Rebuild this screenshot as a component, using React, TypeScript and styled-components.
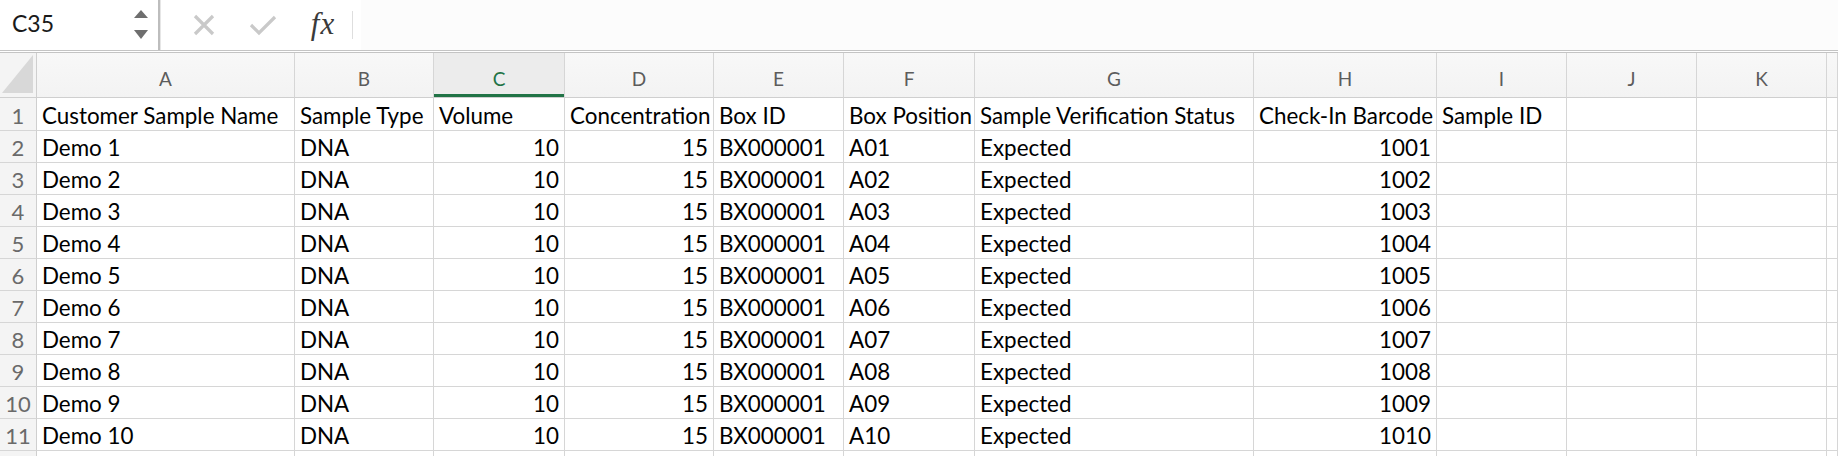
import styled, { createGlobalStyle } from 'styled-components';

const GlobalStyle = createGlobalStyle`
	html, body {
		margin: 0;
		padding: 0;
		background: #ffffff;
	}
	body {
		width: 1838px;
		height: 456px;
		overflow: hidden;
		font-family: Lato, "Liberation Sans", sans-serif;
	}
`;

const COLUMNS = [
	{ key: 'A', width: 258 },
	{ key: 'B', width: 139 },
	{ key: 'C', width: 131 },
	{ key: 'D', width: 149 },
	{ key: 'E', width: 130 },
	{ key: 'F', width: 131 },
	{ key: 'G', width: 279 },
	{ key: 'H', width: 183 },
	{ key: 'I', width: 130 },
	{ key: 'J', width: 130 },
	{ key: 'K', width: 130 },
];

const TEMPLATE = `37px ${COLUMNS.map((c) => c.width + 'px').join(' ')} 1fr`;

const HEADERS = [
	'Customer Sample Name',
	'Sample Type',
	'Volume',
	'Concentration',
	'Box ID',
	'Box Position',
	'Sample Verification Status',
	'Check-In Barcode',
	'Sample ID',
];

const rows = Array.from({ length: 10 }, (_, i) => {
	const n = i + 1;
	return [
		{ text: `Demo ${n}` },
		{ text: 'DNA' },
		{ text: '10', num: true },
		{ text: '15', num: true },
		{ text: 'BX000001' },
		{ text: `A${String(n).padStart(2, '0')}` },
		{ text: 'Expected' },
		{ text: String(1000 + n), num: true },
		{ text: '' },
	];
});

const Sheet = styled.div`
	width: 1838px;
	height: 456px;
	overflow: hidden;
	display: flex;
	flex-direction: column;
`;

const FormulaBar = styled.div`
	height: 50px;
	display: flex;
	align-items: stretch;
	background: #ffffff;
	border-bottom: 3px double #c4c4c4;
	flex-shrink: 0;
`;

const NameBox = styled.div`
	width: 160px;
	display: flex;
	align-items: center;
	justify-content: space-between;
	padding: 0 9px 0 12px;
	box-sizing: border-box;
	font-size: 23px;
	color: #1a1a1a;
	border-right: 2px solid #bdbdbd;
	box-shadow: 1px 0 0 #e6e6e6;
`;

const NameText = styled.span`
	padding-bottom: 5px;
`;

const Stepper = styled.svg`
	display: block;
`;

const ActionGroup = styled.div`
	display: flex;
	align-items: center;
	padding-left: 22px;
`;

const ActionIcon = styled.div<{ $w: number }>`
	width: ${(p) => p.$w}px;
	display: flex;
	align-items: center;
	justify-content: center;
`;

const Fx = styled.span`
	font-family: "Liberation Serif", "DejaVu Serif", serif;
	font-style: italic;
	font-size: 31px;
	color: #3a3a3a;
	letter-spacing: 1px;
	padding-bottom: 3px;
`;

const Divider = styled.div`
	width: 1px;
	height: 28px;
	background: #dedede;
	margin-left: 6px;
`;

const FormulaInput = styled.div`
	flex: 1;
	background: #fcfcfc;
	margin-left: 8px;
`;

const Grid = styled.div`
	display: grid;
	grid-template-columns: ${TEMPLATE};
	grid-template-rows: 45px 33px;
	grid-auto-rows: 32px;
	flex: 1;
`;

const Corner = styled.div`
	background: #f4f4f4;
	border-right: 1px solid #cfcfcf;
	border-bottom: 1px solid #cfcfcf;
	box-sizing: border-box;
	position: relative;
`;

const CornerMark = styled.svg`
	position: absolute;
	left: 2px;
	top: 2px;
`;

const ColHead = styled.div<{ $active?: boolean }>`
	display: flex;
	align-items: center;
	justify-content: center;
	box-sizing: border-box;
	font-size: 19px;
	padding-top: 6px;
	color: ${(p) => (p.$active ? '#217346' : '#5c5c5c')};
	background: ${(p) => (p.$active ? '#ececec' : 'linear-gradient(#f8f8f8, #f3f3f3)')};
	border-right: 1px solid #d6d6d6;
	border-bottom: 1px solid #cfcfcf;
	box-shadow: ${(p) => (p.$active ? 'inset 0 -3px 0 #217346' : 'none')};
`;

const RowHead = styled.div`
	display: flex;
	align-items: flex-end;
	justify-content: center;
	box-sizing: border-box;
	padding-bottom: 1px;
	font-size: 22px;
	color: #6a6a6a;
	background: #f4f4f4;
	border-right: 1px solid #cfcfcf;
	border-bottom: 1px solid #d6d6d6;
`;

const Cell = styled.div<{ $num?: boolean }>`
	display: flex;
	align-items: flex-end;
	justify-content: ${(p) => (p.$num ? 'flex-end' : 'flex-start')};
	box-sizing: border-box;
	padding: 0 5px 1px 5px;
	font-size: 22.4px;
	color: #000000;
	white-space: nowrap;
	overflow: hidden;
	border-right: 1px solid #d6d6d6;
	border-bottom: 1px solid #d6d6d6;
`;

const App = () => {
	const blanks = COLUMNS.length - HEADERS.length + 1;
	return (
		<>
			<GlobalStyle />
			<Sheet>
				<FormulaBar>
					<NameBox>
						<NameText>C35</NameText>
						<Stepper width="16" height="34" viewBox="0 0 16 34">
							<path d="M8 2 L15 10 L1 10 Z" fill="#6e6e6e" />
							<path d="M1 22 L15 22 L8 31 Z" fill="#6e6e6e" />
						</Stepper>
					</NameBox>
					<ActionGroup>
						<ActionIcon $w={44}>
							<svg width="22" height="22" viewBox="0 0 22 22">
								<path d="M2 2 L20 20 M20 2 L2 20" stroke="#c9c9c9" strokeWidth="3.2" />
							</svg>
						</ActionIcon>
						<ActionIcon $w={74}>
							<svg width="28" height="22" viewBox="0 0 28 22">
								<path d="M2 11 L10 19 L26 3" stroke="#c9c9c9" strokeWidth="3.2" fill="none" />
							</svg>
						</ActionIcon>
						<ActionIcon $w={46}>
							<Fx>fx</Fx>
						</ActionIcon>
						<Divider />
					</ActionGroup>
					<FormulaInput />
				</FormulaBar>
				<Grid>
					<Corner>
						<CornerMark width="31" height="38" viewBox="0 0 31 38">
							<path d="M31 0 L31 38 L0 38 Z" fill="#d8d8d8" />
						</CornerMark>
					</Corner>
					{COLUMNS.map((c) => (
						<ColHead key={c.key} $active={c.key === 'C'}>
							{c.key}
						</ColHead>
					))}
					<ColHead />

					<RowHead>1</RowHead>
					{HEADERS.map((h) => (
						<Cell key={h}>{h}</Cell>
					))}
					{Array.from({ length: blanks }, (_, i) => (
						<Cell key={'b' + i} />
					))}

					{rows.map((r, ri) => (
						<>
							<RowHead key={'r' + ri}>{ri + 2}</RowHead>
							{r.map((c, ci) => (
								<Cell key={ri + '-' + ci} $num={c.num}>
									{c.text}
								</Cell>
							))}
							{Array.from({ length: blanks }, (_, i) => (
								<Cell key={ri + 'b' + i} />
							))}
						</>
					))}

					<RowHead />
					{Array.from({ length: COLUMNS.length + 1 }, (_, i) => (
						<Cell key={'last' + i} />
					))}
				</Grid>
			</Sheet>
		</>
	);
};

export default App;
